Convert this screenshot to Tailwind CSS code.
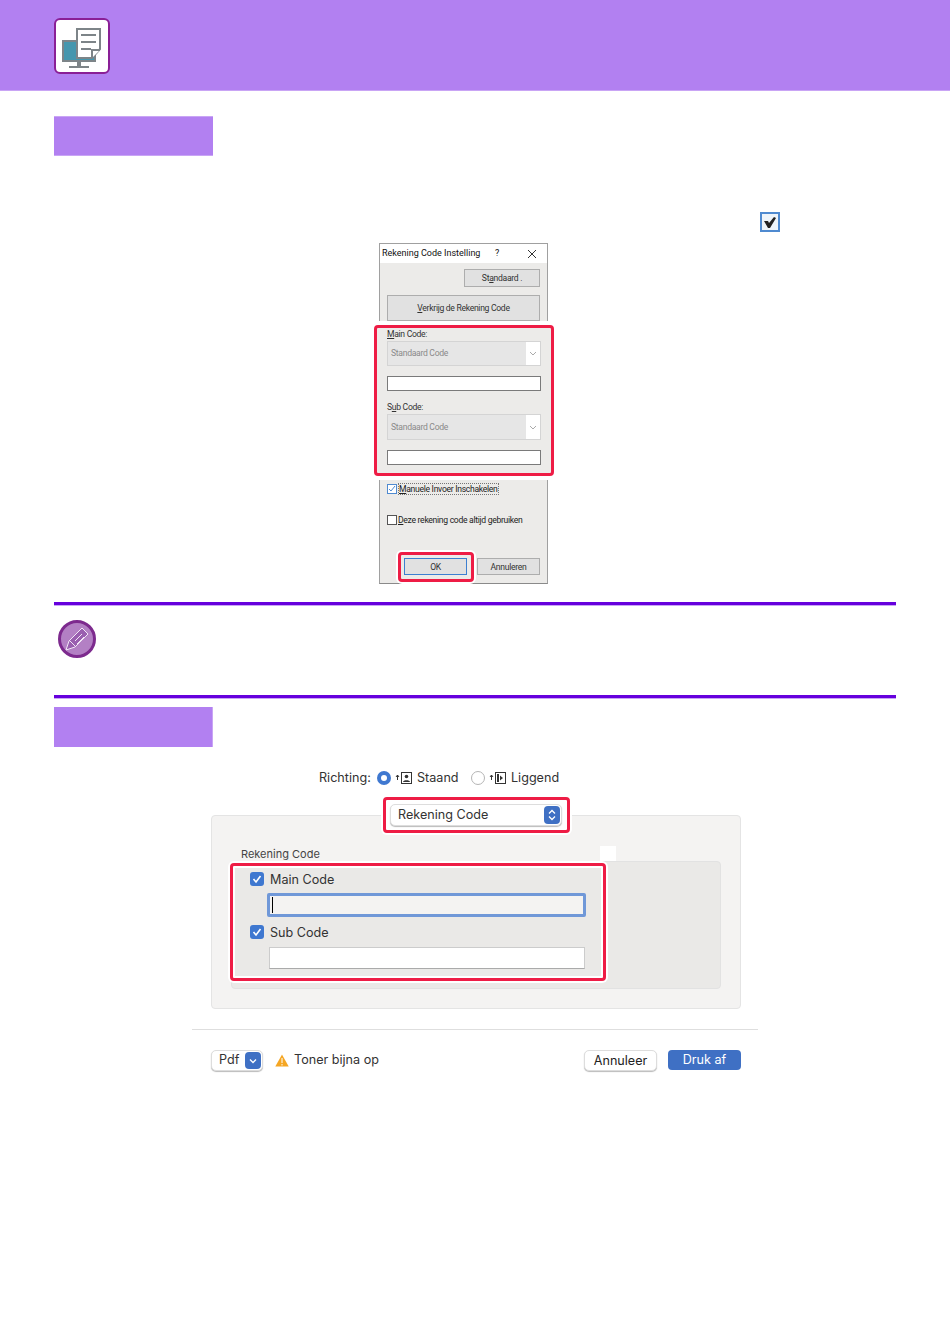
<!DOCTYPE html>
<html lang="nl">
<head>
   <meta charset="UTF-8">
   <title>Rekening Code</title>
   <script src="https://cdn.jsdelivr.net/npm/@tailwindcss/browser@4"></script>
</head>
<body class="bg-white font-['Inter',sans-serif]">
<div class="w-[950px] h-[1344px] overflow-hidden">
   <!-- header -->
   <div class="h-[91px] bg-[#b280f1] border-b border-[#c9a5f5] pl-[54px] pt-[18px]">
      <div class="w-[56px] h-[56px] bg-white border-2 border-[#8a1f96] rounded-[6px]">
         <svg width="52" height="52" viewBox="0 0 52 52">
            <rect x="7" y="21" width="32" height="20" fill="#4596ae" stroke="#7d8488" stroke-width="2"/>
            <path d="M21 42h4v4h-4zM13 46h20v2H13z" fill="#7d8488"/>
            <path d="M21 9h23v20l-8 9H21z" fill="#fff" stroke="#7d8488" stroke-width="2"/>
            <path d="M25 15h15M25 22h15M25 29h10" stroke="#7d8488" stroke-width="2"/>
            <path d="M36 38v-8h8" fill="#fff" stroke="#7d8488" stroke-width="2"/>
         </svg>
      </div>
   </div>

   <div class="mt-[25px] ml-[54px] w-[159px] h-[40px] bg-[#b280f1] border-y border-[#c9a5f5]"></div>

   <!-- checkbox glyph -->
   <div class="mt-[56px] ml-[760px] w-[20px] h-[20px] border-2 border-[#4f8ad0] bg-[#eef4fa] flex items-center justify-center">
      <svg width="14" height="13" viewBox="0 0 14 13"><path d="M1 5h4l1 2 5-6 2 1-6 10H5z" fill="#222"/></svg>
   </div>

   <!-- windows dialog -->
   <div class="mt-[11px] ml-[379px] w-[169px] h-[341px] border border-[#a0a0a0] border-b-[#8a8a8a] bg-[#ecebe9] text-[8.6px] tracking-[-0.3px] text-[#333] font-['Roboto',sans-serif] flex flex-col">
      <div class="h-[19px] bg-white flex items-center pl-[2px] text-[#111] text-[9px] tracking-normal">
         <span class="w-[113px]">Rekening Code Instelling</span>
         <span class="w-[32px]">?</span>
         <svg width="10" height="10" viewBox="0 0 10 10"><path d="M1 1l8 8M9 1l-8 8" stroke="#333" stroke-width="1"/></svg>
      </div>
      <div class="h-[58px] flex flex-col">
         <div class="mt-[6px] ml-[84px] w-[76px] h-[18px] bg-[#e1e1e1] border border-[#adadad] flex items-center justify-center"><span>St<u>a</u>ndaard .</span></div>
         <div class="mt-[8px] ml-[7px] w-[153px] h-[26px] bg-[#e1e1e1] border border-[#adadad] flex items-center justify-center"><span><u>V</u>erkrijg de Rekening Code</span></div>
      </div>
      <!-- red highlighted part -->
      <div class="-ml-[6px] -mr-[7px] h-[159px] bg-white py-[4px]">
         <div class="h-[151px] border-[3px] border-[#ee1c45] rounded-[4px] bg-[#ecebe9] pl-[10px] pr-[10px] relative">
            <div class="h-[13px] leading-[13px]"><u>M</u>ain Code:</div>
            <div class="h-[25px] w-[154px] border border-[#d4d4d4] bg-[#e6e6e6] flex text-[#8a8a8a]">
               <span class="flex-1 pl-[3px] leading-[23px]">Standaard Code</span>
               <span class="w-[14px] bg-white flex items-center justify-center"><svg width="8" height="5" viewBox="0 0 8 5"><path d="M1 1l3 3 3-3" fill="none" stroke="#aaa"/></svg></span>
            </div>
            <div class="mt-[10px] h-[15px] w-[154px] bg-white border border-[#7a7a7a]"></div>
            <div class="h-[13px] mt-[10px] leading-[13px]">S<u>u</u>b Code:</div>
            <div class="h-[26px] w-[154px] border border-[#d4d4d4] bg-[#e6e6e6] flex text-[#8a8a8a]">
               <span class="flex-1 pl-[3px] leading-[24px]">Standaard Code</span>
               <span class="w-[14px] bg-white flex items-center justify-center"><svg width="8" height="5" viewBox="0 0 8 5"><path d="M1 1l3 3 3-3" fill="none" stroke="#aaa"/></svg></span>
            </div>
            <div class="mt-[10px] h-[15px] w-[154px] bg-white border border-[#7a7a7a]"></div>
         </div>
      </div>
      <div class="flex-1 pl-[7px] relative">
         <div class="mt-[4px] flex items-center h-[10px]">
            <span class="w-[10px] h-[10px] border border-[#4f8ad0] bg-white flex items-center justify-center"><svg width="8" height="8" viewBox="0 0 8 8"><path d="M1 4l2 2 4-5" fill="none" stroke="#4f8ad0"/></svg></span>
            <span class="ml-px border border-dotted border-[#777] leading-[10px] text-[#222]"><u>M</u>anuele Invoer Inschakelen</span>
         </div>
         <div class="mt-[21px] flex items-center h-[10px]">
            <span class="w-[10px] h-[10px] border border-[#555] bg-white"></span>
            <span class="ml-px text-[#222]"><u>D</u>eze rekening code altijd gebruiken</span>
         </div>
         <div class="mt-[33px] flex">
            <div class="ml-[17px] w-[63px] h-[17px] bg-[#e1e1e1] border border-[#3d7fd0] text-center leading-[16px] relative">
               OK
               <div class="absolute -left-[7px] -top-[7px] w-[76px] h-[30px] border-[3px] border-[#ee1c45] rounded-[4px] shadow-[0_0_0_2px_white]"></div>
            </div>
            <div class="ml-[10px] w-[63px] h-[17px] bg-[#e1e1e1] border border-[#adadad] text-center leading-[16px]">Annuleren</div>
         </div>
      </div>
   </div>

   <!-- note -->
   <div class="mt-[18px] ml-[54px] w-[842px] h-[93px] border-t-[3px] border-[#6600dd]">
      <div class="h-px bg-[#c9a5f5]"></div>
      <svg class="ml-[4px] mt-[14px]" width="38" height="38" viewBox="0 0 38 38">
         <circle cx="19" cy="19" r="17.500" fill="#b380c4" stroke="#7d2a8e" stroke-width="3"/>
         <path d="M8 30l3-9L24 8l6 6-13 13z" fill="#9a5fb0" stroke="#f1e6f5" stroke-width="1"/>
         <path d="M12 21l6 6M14 18l7-7M17 21l7-7M19 24l7-7" stroke="#f1e6f5" stroke-width="1" fill="none"/>
      </svg>
   </div>
   <div class="ml-[54px] w-[842px] h-[3px] bg-[#6600dd]"></div>
   <div class="ml-[54px] w-[842px] h-px bg-[#c9a5f5]"></div>

   <div class="mt-[8px] ml-[54px] w-[159px] h-[40px] bg-[#b280f1] border-r border-[#c9a5f5]"></div>

   <!-- richting -->
   <div class="mt-[22px] ml-[319px] h-[18px] flex items-center text-[12.6px] text-[#333]">
      <span class="w-[52px]">Richting:</span>
      <span class="ml-[6px] w-[14px] h-[14px] rounded-full bg-[#3f78d0] flex items-center justify-center"><span class="w-[6px] h-[6px] rounded-full bg-white"></span></span>
      <svg class="ml-[4px]" width="18" height="14" viewBox="0 0 18 14"><path d="M2.500 9V4M1 6l1.500-2L4 6" fill="none" stroke="#333"/><rect x="6.500" y="1.500" width="10" height="11" fill="none" stroke="#333"/><circle cx="11.500" cy="5.500" r="1.800" fill="#333"/><path d="M8 11c0-2.500 7-2.500 7 0z" fill="#333"/></svg>
      <span class="ml-[4px] w-[42px]">Staand</span>
      <span class="ml-[12px] w-[14px] h-[14px] rounded-full bg-white border border-[#b5b5b5]"></span>
      <svg class="ml-[4px]" width="18" height="14" viewBox="0 0 18 14"><path d="M2.500 9V4M1 6l1.500-2L4 6" fill="none" stroke="#333"/><rect x="6.500" y="1.500" width="10" height="11" fill="none" stroke="#333"/><path d="M8 3h2v8H8zM11 4.500l3 2.500-3 2.500z" fill="#333"/></svg>
      <span class="ml-[4px]">Liggend</span>
   </div>

   <!-- select with highlight -->
   <div class="mt-[10px] ml-[383px] w-[187px] h-[36px] relative z-10 border-[3px] border-[#ee1c45] rounded-[4px] bg-white shadow-[0_0_0_2px_white] flex items-center pl-[4px]">
      <div class="w-[172px] h-[22px] bg-white rounded-[5px] border border-[#ddd] shadow-[0_1px_1px_#bbb] flex items-center justify-between pl-[7px] pr-[1px] text-[12.6px] text-[#333]">
         <span>Rekening Code</span>
         <span class="w-[16px] h-[18px] rounded-[4px] bg-[#3f70c4] flex items-center justify-center"><svg width="8" height="12" viewBox="0 0 8 12"><path d="M1 4.500L4 1.500l3 3M1 7.500l3 3 3-3" fill="none" stroke="#fff" stroke-width="1.300"/></svg></span>
      </div>
   </div>

   <!-- mac panel -->
   <div class="-mt-[18px] ml-[211px] w-[530px] h-[194px] bg-[#f4f3f2] border border-[#e4e4e4] rounded-[4px] relative pt-[31px]">
      <div class="absolute left-[388px] top-[30px] w-[16px] h-[15px] bg-white"></div>
      <div class="ml-[29px] h-[14px] leading-[14px] text-[11px] text-[#444]">Rekening Code</div>
      <div class="ml-[19px] w-[490px] h-[128px] bg-[#eae9e7] border border-[#e2e2e2] rounded-[4px] pt-px">
         <div class="-ml-[2px] w-[376px] h-[118px] border-[3px] border-[#ee1c45] rounded-[4px] bg-white shadow-[0_0_0_2px_white] p-[2px]">
            <div class="h-full bg-[#eae9e7] text-[12.6px] text-[#333] pl-[15px] pt-[4px]">
               <div class="flex items-center h-[14px]">
                  <span class="w-[14px] h-[14px] rounded-[3px] bg-[#3f78d0] flex items-center justify-center"><svg width="10" height="10" viewBox="0 0 10 10"><path d="M1.500 5l2.500 3 4.500-6" fill="none" stroke="#fff" stroke-width="1.600"/></svg></span>
                  <span class="ml-[6px] pt-[2px]">Main Code</span>
               </div>
               <div class="mt-[7px] ml-[17px] w-[319px] h-[24px] border-[3px] border-[#7098d8] rounded-[2px] bg-[#f4f3f2] flex items-center pl-[2px]">
                  <span class="w-px h-[16px] bg-black"></span>
               </div>
               <div class="mt-[8px] flex items-center h-[14px]">
                  <span class="w-[14px] h-[14px] rounded-[3px] bg-[#3f78d0] flex items-center justify-center"><svg width="10" height="10" viewBox="0 0 10 10"><path d="M1.500 5l2.500 3 4.500-6" fill="none" stroke="#fff" stroke-width="1.600"/></svg></span>
                  <span class="ml-[6px] pt-[2px]">Sub Code</span>
               </div>
               <div class="mt-[8px] ml-[19px] w-[316px] h-[22px] bg-white border border-[#ccc] border-b-[#aaa]"></div>
            </div>
         </div>
      </div>
   </div>

   <div class="mt-[20px] ml-[192px] w-[566px] h-px bg-[#dedede]"></div>

   <!-- footer buttons -->
   <div class="mt-[20px] ml-[211px] w-[530px] h-[21px] flex items-center text-[12.6px] text-[#333]">
      <div class="w-[52px] h-[21px] bg-white rounded-[5px] border border-[#ddd] shadow-[0_1px_1px_#bbb] flex items-center justify-between pl-[7px] pr-[1px]">
         <span>Pdf</span>
         <span class="w-[16px] h-[17px] rounded-[4px] bg-[#3f70c4] flex items-center justify-center"><svg width="8" height="6" viewBox="0 0 8 6"><path d="M1 1.500l3 3 3-3" fill="none" stroke="#fff" stroke-width="1.300"/></svg></span>
      </div>
      <svg class="ml-[12px]" width="14" height="13" viewBox="0 0 14 13"><path d="M7 0.500L13.700 12.500H0.300z" fill="#f5a623"/><path d="M7 4v5M7 10v1.500" stroke="#fff" stroke-width="1"/></svg>
      <span class="ml-[5px]">Toner bijna op</span>
      <div class="ml-auto w-[73px] h-[21px] bg-white rounded-[5px] border border-[#ddd] shadow-[0_1px_1px_#bbb] text-center leading-[19px] text-[#222]">Annuleer</div>
      <div class="ml-[11px] self-start w-[73px] h-[20px] rounded-[4px] bg-[#3f70c4] text-white text-center leading-[20px]">Druk af</div>
   </div>
</div>
</body>
</html>
